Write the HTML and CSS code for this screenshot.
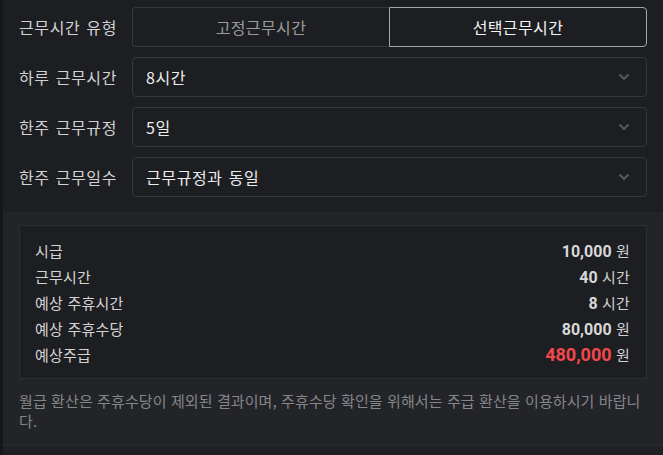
FILE: index.html
```html
<!DOCTYPE html>
<html lang="ko">
<head>
<meta charset="utf-8">
<link rel="stylesheet" href="styles.css">
</head>
<body>
<div class="page">
  <section class="form">
    <div class="row">
      <div class="label">근무시간 유형</div>
      <div class="toggle">
        <button class="opt">고정근무시간</button>
        <button class="opt active">선택근무시간</button>
      </div>
    </div>
    <div class="row">
      <div class="label">하루 근무시간</div>
      <div class="select"><span>8시간</span>
        <svg class="chev" width="12" height="8" viewBox="0 0 12 8"><path d="M1.5 1.5 L6 6 L10.5 1.5" fill="none" stroke="currentColor" stroke-width="2.2"/></svg>
      </div>
    </div>
    <div class="row">
      <div class="label">한주 근무규정</div>
      <div class="select"><span>5일</span>
        <svg class="chev" width="12" height="8" viewBox="0 0 12 8"><path d="M1.5 1.5 L6 6 L10.5 1.5" fill="none" stroke="currentColor" stroke-width="2.2"/></svg>
      </div>
    </div>
    <div class="row">
      <div class="label">한주 근무일수</div>
      <div class="select"><span>근무규정과 동일</span>
        <svg class="chev" width="12" height="8" viewBox="0 0 12 8"><path d="M1.5 1.5 L6 6 L10.5 1.5" fill="none" stroke="currentColor" stroke-width="2.2"/></svg>
      </div>
    </div>
  </section>
  <section class="result">
    <div class="box">
      <div class="line"><span class="k">시급</span><span class="v"><b>10,000</b> 원</span></div>
      <div class="line"><span class="k">근무시간</span><span class="v"><b>40</b> 시간</span></div>
      <div class="line"><span class="k">예상 주휴시간</span><span class="v"><b>8</b> 시간</span></div>
      <div class="line"><span class="k">예상 주휴수당</span><span class="v"><b>80,000</b> 원</span></div>
      <div class="line"><span class="k">예상주급</span><span class="v"><b class="red">480,000</b> 원</span></div>
    </div>
    <p class="note">월급 환산은 주휴수당이 제외된 결과이며, 주휴수당 확인을 위해서는 주급 환산을 이용하시기 바랍니다.</p>
  </section>
  <div class="foot"></div>
</div>
</body>
</html>
```
FILE: styles.css
```css
* { box-sizing: border-box; }
html, body { margin: 0; padding: 0; }
body {
  background: #1d1e22;
  font-family: "Noto Sans CJK KR", "Noto Sans", sans-serif;
  color: #d4d4d4;
  width: 663px;
  height: 455px;
  overflow: hidden;
}
.page {
  border-left: 3px solid #16171a;
  min-height: 455px;
}
.form {
  padding: 7px 16px 15px 16px;
  display: flex;
  flex-direction: column;
  gap: 10px;
}
.row {
  display: flex;
  align-items: center;
  height: 40px;
}
.label {
  width: 113px;
  font-size: 16px;
  letter-spacing: 0.6px;
  word-spacing: 1px;
  color: #d2d2d2;
  line-height: 20px;
  white-space: nowrap;
}
.toggle {
  flex: 1;
  display: flex;
  height: 40px;
}
.opt {
  flex: 1;
  font-family: inherit;
  font-size: 16px;
  letter-spacing: 0.4px;
  background: #1d1e22;
  color: #9b9b9b;
  border: 1px solid #36373c;
  border-right: none;
  border-radius: 4px 0 0 4px;
  padding: 0;
}
.opt.active {
  border: 1px solid #a6a6a8;
  border-radius: 0 4px 4px 0;
  color: #f4f4f4;
}
.select {
  flex: 1;
  height: 40px;
  border: 1px solid #36373c;
  border-radius: 4px;
  display: flex;
  align-items: center;
  justify-content: space-between;
  padding: 0 16px 0 13px;
  font-size: 16px;
  letter-spacing: 0.6px;
  word-spacing: 1px;
  color: #ececec;
}
.chev { color: #55565b; }
.result {
  background: #232428;
  padding: 13px 16px 14px 16px;
  border-bottom: 1px solid #2a2b2f;
}
.box {
  background: #1d1e22;
  border: 1px solid #2d2e32;
  padding: 11px 16px 11px 15px;
}
.line {
  display: flex;
  justify-content: space-between;
  height: 26px;
  align-items: center;
  font-size: 15px;
  letter-spacing: 0.2px;
  color: #d4d4d4;
}
.v { color: #cfcfcf; }
.v b {
  font-family: Roboto, "Noto Sans CJK KR", sans-serif;
  font-weight: 700;
  font-size: 16px;
  letter-spacing: 0;
  color: #d8d8d8;
}
.v b.red { color: #f4474b; font-size: 18px; }
.note {
  margin: 12px 0 0 0;
  font-size: 15px;
  letter-spacing: 0.1px;
  line-height: 20px;
  color: #85868a;
}
.foot { height: 11px; background: #1f2023; }
```
